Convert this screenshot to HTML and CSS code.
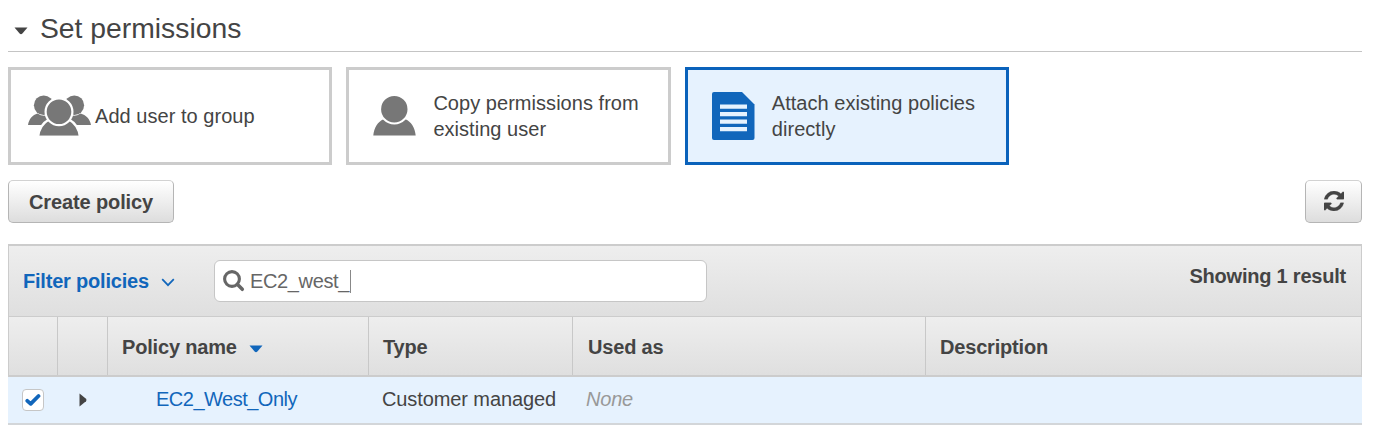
FILE: index.html
```html
<!DOCTYPE html>
<html lang="en">
<head>
<meta charset="utf-8">
<title>Set permissions</title>
<link rel="stylesheet" href="styles.css">
</head>
<body>
<main class="page">
  <header class="section-head">
    <svg class="caret" width="14" height="8" viewBox="0 0 14 8"><path d="M.5 .5h13L8.4 6.6Q7 8 5.600 6.600Z" fill="#444"/></svg>
    <h1 class="title">Set permissions</h1>
  </header>

  <div class="cards">
    <div class="card card-group">
      <svg class="icon-group" width="64" height="42" viewBox="0 0 64 42">
        <g fill="#777">
          <circle cx="15.700" cy="10.300" r="9.800"/>
          <circle cx="46.300" cy="10.300" r="9.800"/>
          <path d="M0 30C1 24 4.500 20 9.500 18.500Q16 23 22 18.500L30 30Z"/>
          <path d="M63 30C62 24 58 20 52.500 18.500Q46 23 40 18.500L32 30Z"/>
        </g>
        <path d="M10 42C11 33.500 15.500 27.500 21 24.500H41C46.500 27.500 51 33.500 52 42Z" fill="#777" stroke="#fff" stroke-width="2.400"/>
        <path d="M8 40.800h46v1.200h-46z" fill="#fff"/>
        <circle cx="31" cy="16.700" r="13.400" fill="#777" stroke="#fff" stroke-width="2.200"/>
      </svg>
      <span class="card-text">Add user to group</span>
    </div>
    <div class="card">
      <svg class="icon-user" width="43" height="40" viewBox="0 0 43 40">
        <path d="M.3 39.500C1 31.500 5 25.500 10.500 23.200Q21.300 32.500 32.500 23.200C38 25.500 42 31.500 42.700 39.500Z" fill="#777"/>
        <circle cx="21.300" cy="13.200" r="14.200" fill="#777" stroke="#fff" stroke-width="2"/>
      </svg>
      <span class="card-text">Copy permissions from<br>existing user</span>
    </div>
    <div class="card card-selected">
      <svg class="icon-doc" width="43" height="48" viewBox="0 0 43 48">
        <path d="M2 0H30L42.500 12.500V46Q42.500 48 40.500 48H2Q0 48 0 46V2Q0 0 2 0Z" fill="#1166bb"/>
        <path d="M8 12.500h27v4.300h-27zM8 20h27v4.300h-27zM8 27.500h27v4.300h-27zM8 35h27v4.300h-27z" fill="#e6f2fe"/>
      </svg>
      <span class="card-text">Attach existing policies<br>directly</span>
    </div>
  </div>

  <div class="toolbar">
    <button class="btn btn-create" type="button">Create policy</button>
    <button class="btn btn-refresh" type="button" aria-label="Refresh">
      <svg width="20" height="20" viewBox="0 0 1536 1536"><path fill="#444" stroke="#444" stroke-width="20" d="M1511 928q0 5-1 7-64 268-268 434.500T764 1536q-146 0-282.500-55T238 1324l-129 129q-19 19-45 19t-45-19-19-45V960q0-26 19-45t45-19h448q26 0 45 19t19 45-19 45l-137 137q71 66 161 102t187 36q134 0 250-65t186-179q11-17 53-117 8-23 30-23h192q13 0 22.500 9.500t9.500 22.500zm25-800v448q0 26-19 45t-45 19h-448q-26 0-45-19t-19-45 19-45l138-138Q969 256 768 256q-134 0-250 65T332 500q-11 17-53 117-8 23-30 23H50q-13 0-22.500-9.500T18 608v-7q65-268 270-434.500T768 0q146 0 284 55.500T1297 212l130-129q19-19 45-19t45 19 19 45z"/></svg>
    </button>
  </div>

  <section class="panel">
    <div class="filter-bar">
      <a class="filter-link">Filter policies</a>
      <svg class="chevron" width="14" height="9" viewBox="0 0 14 9"><path d="M1.200 1.200L7 7.200 12.800 1.200" fill="none" stroke="#1166bb" stroke-width="1.700"/></svg>
      <div class="search">
        <svg class="icon-search" width="22" height="22" viewBox="0 0 22 22"><circle cx="9" cy="9" r="7.400" fill="none" stroke="#666" stroke-width="3.100"/><path d="M14.300 14.300L19.300 19.300" stroke="#666" stroke-width="3.500" stroke-linecap="round"/></svg>
        <span class="query">EC2_west_</span><span class="cursor"></span>
      </div>
      <span class="count">Showing 1 result</span>
    </div>
    <div class="grid grid-head">
      <div class="th"></div>
      <div class="th"></div>
      <div class="th">Policy name<svg class="sort" width="14" height="8" viewBox="0 0 14 8"><path d="M.5 .5h13L8.400 6.600Q7 8 5.600 6.600Z" fill="#1166bb"/></svg></div>
      <div class="th">Type</div>
      <div class="th">Used as</div>
      <div class="th">Description</div>
    </div>
  </section>
  <div class="grid grid-row">
    <div class="td-check"><span class="checkbox"><svg width="16" height="14" viewBox="0 0 16 14"><path d="M2.300 7.800L5.700 10.800 13.500 3" fill="none" stroke="#1166bb" stroke-width="3.800" stroke-linecap="round" stroke-linejoin="round"/></svg></span></div>
    <div class="td-expand"><svg width="8" height="14" viewBox="0 0 8 14"><path d="M.5 .5V13.500L7 8.200Q8 7 7 5.800Z" fill="#444"/></svg></div>
    <div class="td-name">EC2_West_Only</div>
    <div class="td-type">Customer managed</div>
    <div class="td-used">None</div>
    <div></div>
  </div>
</main>
</body>
</html>
```
FILE: styles.css
```css
* { box-sizing: border-box; }
body {
  margin: 0;
  background: #fff;
  color: #444;
  font: 20px/25px "Liberation Sans", Arial, sans-serif;
}
.page { width: 1362px; padding-left: 8px; }
.section-head {
  display: flex;
  align-items: center;
  height: 52px;
  padding: 5px 0 0 6px;
  border-bottom: 1px solid #c4c4c4;
}
.caret { margin-top: 5px; }
.title { margin: 0 0 0 12px; font-size: 28.3px; line-height: 34px; font-weight: 400; }

.cards { display: flex; gap: 14px; margin-top: 15px; }
.card {
  display: flex;
  align-items: center;
  width: 324.400px;
  height: 98px;
  padding-left: 24px;
  border: 3px solid #ccc;
}
.card-group { padding-left: 17px; }
.card-selected { background: #e6f2fe; border-color: #0a62bb; }
.icon-group { margin-right: 3px; }
.icon-user, .icon-doc { margin-right: 17px; flex: none; }
.card-text { white-space: nowrap; line-height: 26px; letter-spacing: .04px; }

.toolbar { display: flex; justify-content: space-between; margin-top: 15px; }
.btn {
  display: flex;
  align-items: center;
  justify-content: center;
  height: 43px;
  padding: 0;
  border: 1px solid #b5b5b5;
  border-top-color: #d2d2d2;
  border-radius: 5px;
  background: linear-gradient(#fff, #ddd);
  color: #444;
  font: bold 20px/25px "Liberation Sans", Arial, sans-serif;
  letter-spacing: -.12px;
}
.btn-create { width: 166px; padding-top: 2px; }
.btn-refresh { width: 57px; padding-bottom: 2px; }

.panel {
  margin-top: 21px;
  border: 1px solid #ccc;
  border-top-width: 2px;
  border-bottom-width: 2px;
}
.filter-bar {
  display: flex;
  align-items: center;
  height: 70px;
  padding: 0 15px 0 14px;
  background: linear-gradient(#eee, #dfdfdf);
}
.filter-link { color: #1166bb; font-weight: 700; letter-spacing: -.2px; }
.chevron { margin: 3px 0 0 12px; }
.search {
  display: flex;
  align-items: center;
  width: 493px;
  height: 42px;
  margin-left: 39px;
  padding-left: 8px;
  border: 1px solid #c6c6c6;
  border-radius: 6px;
  background: #fff;
  color: #666;
}
.query { margin-left: 5px; letter-spacing: -.35px; }
.cursor { width: 1px; height: 23px; margin-left: 1px; background: #888; }
.count { margin: -10px 0 0 auto; font-weight: 700; letter-spacing: -.22px; }

.grid { display: grid; grid-template-columns: 49px 50px 261px 204px 353px 1fr; }
.grid-head {
  height: 59px;
  border-top: 1px solid #ccc;
  background: linear-gradient(#eee, #dfdfdf);
  font-weight: 700;
  letter-spacing: -.18px;
}
.th { display: flex; align-items: center; padding: 3px 0 0 15px; border-right: 1px solid #c8c8c8; }
.th:nth-child(3), .th:nth-child(4) { padding-left: 14px; }
.th:last-child { border-right: 0; padding-left: 14px; }
.sort { margin: 2px 0 0 12px; }
.grid-row {
  height: 48px;
  padding-bottom: 1px;
  align-items: center;
  border-bottom: 2px solid #d3d6d9;
  background: #e6f2fe;
}
.checkbox {
  display: flex;
  align-items: center;
  justify-content: center;
  width: 22px;
  height: 22px;
  margin-left: 14px;
  border: 1px solid #c6c6c6;
  border-radius: 4px;
  background: #fff;
}
.td-expand { display: flex; padding-left: 22px; }
.td-name { padding-left: 49px; color: #1166bb; letter-spacing: -.5px; }
.td-type { padding-left: 14px; letter-spacing: -.1px; }
.td-used { padding-left: 14px; color: #999; font-style: italic; letter-spacing: -.2px; }
```
